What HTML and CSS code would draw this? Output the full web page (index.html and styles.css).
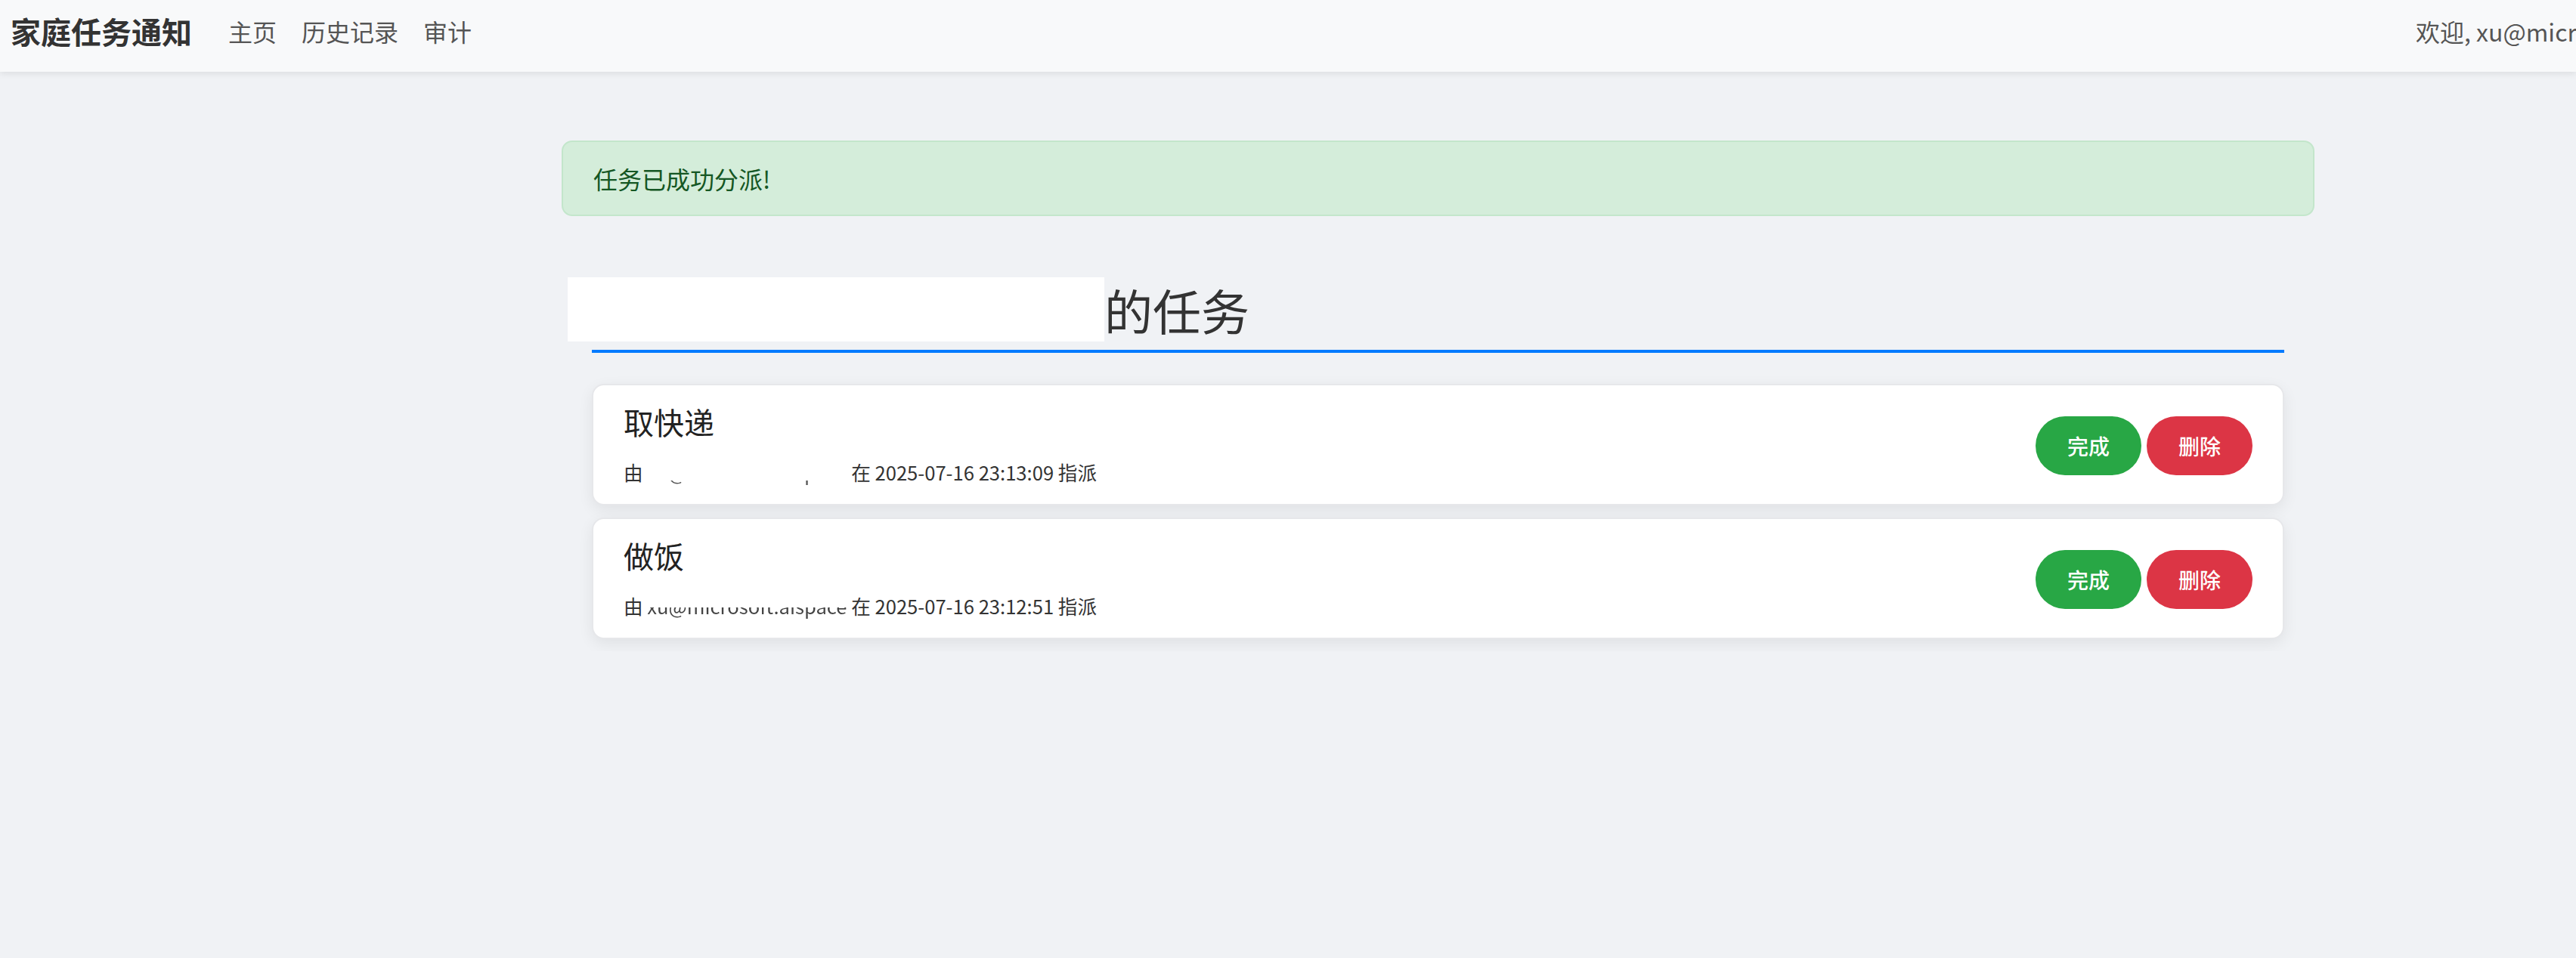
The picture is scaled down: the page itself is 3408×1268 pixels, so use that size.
FILE: index.html
```html
<!DOCTYPE HTML><html>
<head>
  <title>家庭任务通知</title>
  <meta name="viewport" content="width=device-width, initial-scale=1">
  <meta charset="UTF-8">
  <link rel="stylesheet" href="styles.css">
</head>
<body>
  <nav class="navbar">
    <a class="brand" href="#">家庭任务通知</a>
    <ul class="nav-links">
      <li><a href="#">主页</a></li>
      <li><a href="#">历史记录</a></li>
      <li><a href="#">审计</a></li>
    </ul>
    <span class="nav-user">欢迎, xu@microsoft.aispace</span>
  </nav>

  <div class="page">
    <main class="container">
      <div class="alert">任务已成功分派!</div>

      <section class="tasks">
        <h2 class="tasks-title"><span class="redacted"></span>的任务</h2>

        <div class="task-card">
          <div class="task-info">
            <h5>取快递</h5>
            <small>由 <span class="mask">xu@microsoft.aispace</span> 在 2025-07-16 23:13:09 指派</small>
          </div>
          <div class="task-actions">
            <button class="btn btn-green">完成</button>
            <button class="btn btn-red">删除</button>
          </div>
        </div>

        <div class="task-card">
          <div class="task-info">
            <h5>做饭</h5>
            <small>由 <span class="mask mask-half">xu@microsoft.aispace</span> 在 2025-07-16 23:12:51 指派</small>
          </div>
          <div class="task-actions">
            <button class="btn btn-green">完成</button>
            <button class="btn btn-red">删除</button>
          </div>
        </div>
      </section>
    </main>
  </div>
</body>
</html>
```

FILE: styles.css
```css
html {overflow: hidden;}
body {
	margin: 0;
	background: #f0f2f5;
	font-family: "Noto Sans CJK SC", "Noto Sans", sans-serif;
	color: #333;
}

/* top bar */
.navbar {
	display: flex;
	align-items: center;
	height: 95px;
	box-sizing: border-box;
	padding: 0 0 13px 14px;
	background: #f8f9fa;
	box-shadow: 0 3px 8px rgba(0,0,0,.08);
	white-space: nowrap;
}
.brand {
	font-size: 40px;
	font-weight: 700;
	line-height: 60px;
	color: #333;
	text-decoration: none;
	margin-right: 32px;
}
.nav-links {
	display: flex;
	list-style: none;
	margin: 0;
	padding: 0;
}
.nav-links a {
	display: block;
	padding: 0 16px;
	font-size: 32px;
	line-height: 48px;
	color: #555;
	text-decoration: none;
}
.nav-links li + li a {margin-left: 1px;}
.nav-user {
	margin-left: auto;
	width: 212px;
	overflow: hidden;
	font-size: 32px;
	line-height: 48px;
	color: #555;
}

/* page body */
.page {width: 3805px;}
.container {
	width: 2319px;
	margin: 0 auto;
	padding-top: 91px;
}

.alert {
	padding: 24px 40px;
	font-size: 32px;
	line-height: 48px;
	color: #155724;
	background: #d4edda;
	border: 2px solid #c3e6cb;
	border-radius: 14px;
}

.tasks {
	margin: 0 40px;
	padding-top: 81px;
}
.tasks-title {
	display: flex;
	align-items: center;
	margin: 0 0 41px;
	padding-bottom: 11px;
	border-bottom: 4px solid #007bff;
	font-size: 64px;
	font-weight: 400;
	line-height: 77px;
	color: #333;
}
.redacted {
	display: block;
	width: 710px;
	height: 85px;
	margin-left: -32px;
	background: #fff;
}

.task-card {
	display: flex;
	align-items: center;
	justify-content: space-between;
	height: 161px;
	box-sizing: border-box;
	padding: 0 40px;
	margin-bottom: 16px;
	background: #fff;
	border: 2px solid #e6e7ea;
	border-radius: 16px;
	box-shadow: 0 6px 20px rgba(0,0,0,.07);
}
.task-info h5 {
	margin: 0 0 24px;
	font-size: 40px;
	font-weight: 400;
	line-height: 48px;
	color: #222;
}
.task-info small {
	display: block;
	font-size: 25.6px;
	line-height: 38px;
	color: #333;
}
.mask {
	color: transparent;
	background: linear-gradient(#fff 82%, #555 82%);
	-webkit-background-clip: text;
	background-clip: text;
}
.mask-half {background-image: linear-gradient(#fff 58%, #444 58%);}

.task-actions {
	display: flex;
	gap: 7px;
	margin-top: 2px;
}
.btn {
	width: 140px;
	height: 78px;
	border: 0;
	border-radius: 39px;
	font-family: inherit;
	font-size: 28px;
	font-weight: 500;
	color: #fff;
	cursor: pointer;
}
.btn-green {background: #28a745;}
.btn-red {background: #dc3545;}
```
